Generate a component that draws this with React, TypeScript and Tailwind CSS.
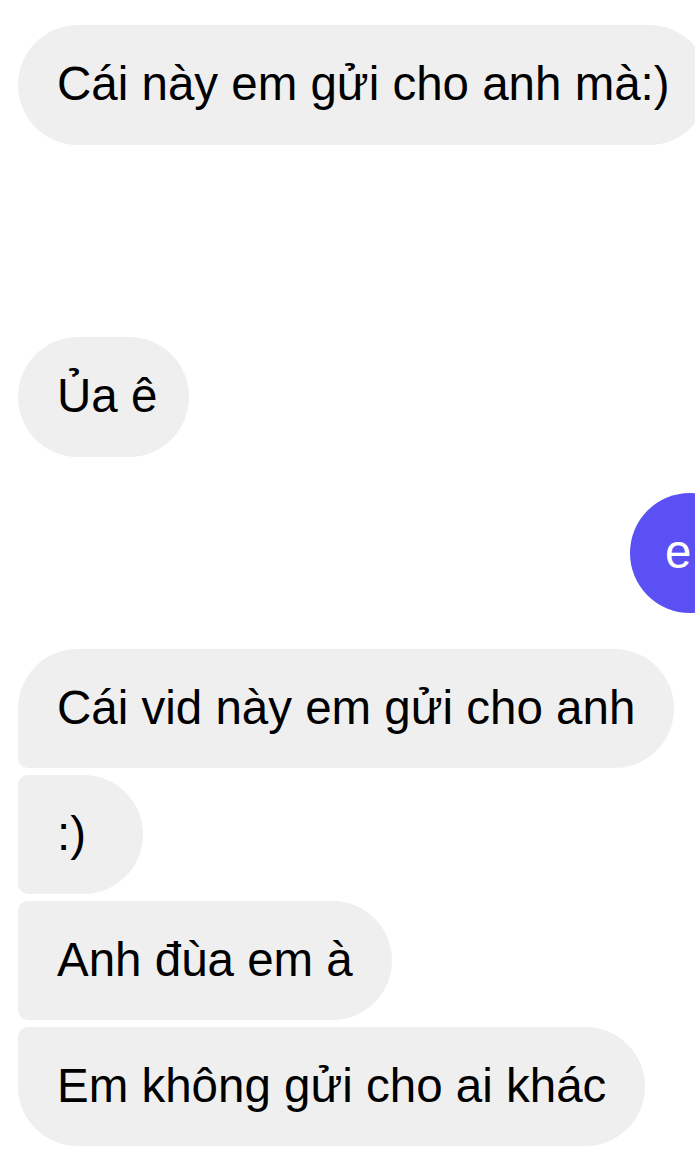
import React from 'react';

type Msg = {
  text: string;
  corners: string;
};

// received group at the bottom: first, middle, middle, last
const group: Msg[] = [
  { text: 'Cái vid này em gửi cho anh', corners: 'rounded-tl-[60px] rounded-bl-[10px]' },
  { text: ':)', corners: 'rounded-tl-[10px] rounded-bl-[10px]' },
  { text: 'Anh đùa em à', corners: 'rounded-tl-[10px] rounded-bl-[10px]' },
  { text: 'Em không gửi cho ai khác', corners: 'rounded-tl-[10px] rounded-bl-[60px]' },
];

const Bubble: React.FC<{ text: string; className?: string }> = ({ text, className = '' }) => (
  <div
    className={`flex shrink-0 items-center whitespace-nowrap pb-[2px] text-[47.5px] leading-none ${className}`}
  >
    {text}
  </div>
);

export default function App() {
  return (
    <div
      className="h-[1162px] w-[695px] overflow-hidden bg-white text-black"
      style={{ fontFamily: '"Liberation Sans", Arial, sans-serif' }}
    >
      <div className="flex flex-col pl-[18px] pt-[25px]">
        {/* single received */}
        <div className="flex">
          <Bubble text="Cái này em gửi cho anh mà:)" className="h-[120px] rounded-[60px] bg-[#efefef] px-[39px]" />
        </div>

        <div className="mt-[192px] flex">
          <Bubble text="Ủa ê" className="h-[120px] rounded-[60px] bg-[#efefef] pl-[39px] pr-[32px]" />
        </div>

        {/* sent, runs off the right edge */}
        <div className="mr-[-55px] mt-[36px] flex justify-end">
          <Bubble text="e" className="h-[120px] w-[120px] rounded-[60px] bg-[#5a50f4] pl-[35px] text-white" />
        </div>

        {/* grouped received */}
        <div className="mt-[36px] flex flex-col items-start gap-[7px]">
          {group.map((m) => (
            <Bubble
              key={m.text}
              text={m.text}
              className={`h-[119px] min-w-[125px] rounded-r-[60px] bg-[#efefef] px-[39px] ${m.corners}`}
            />
          ))}
        </div>
      </div>
    </div>
  );
}
